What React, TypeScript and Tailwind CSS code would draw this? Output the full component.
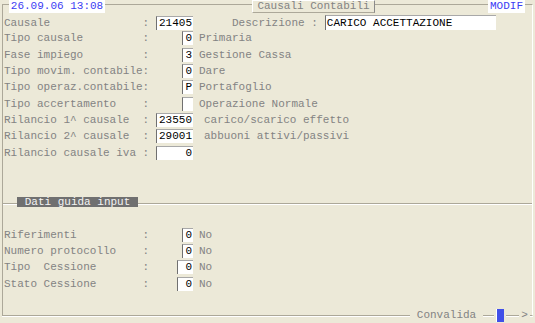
import React from 'react'

type RowProps = {
  label: string
  value: string
  boxW: string
  desc?: string
  descMl?: string
}

function Field({ value, className }: { value: string; className: string }) {
  return (
    <div
      className={`h-[14px] border-l border-t border-l-[#707070] border-t-[#a8a8a8] bg-white pr-[1px] text-right leading-[13px] text-black whitespace-pre ${className}`}
    >
      {value}
    </div>
  )
}

function Row({ label, value, boxW, desc, descMl = 'ml-[6px]' }: RowProps) {
  return (
    <div className="flex h-[16.3px] items-center">
      <span className="w-[146px] whitespace-pre pl-[1px]">{label.padEnd(21, ' ') + ':'}</span>
      <div className="flex w-[44px] justify-end">
        <Field value={value} className={boxW} />
      </div>
      {desc && <span className={`whitespace-pre ${descMl}`}>{desc}</span>}
    </div>
  )
}

export default function App() {
  return (
    <div
      className="h-[323px] w-[535px] overflow-hidden bg-[#ece9d8] pt-[4px] text-[11px] leading-[14px] text-[#838383]"
      style={{ fontFamily: '"Liberation Mono", "Courier New", monospace' }}
    >
      <div className="ml-[2px] flex h-[312px] w-[531px] flex-col border border-[#aca899] border-r-white shadow-[0_1px_0_#fff]">
        {/* header over the top border */}
        <div className="-mt-[5px] flex h-[14px] items-start">
          <div className="ml-[6px] h-[13px] w-[96px] bg-white text-center leading-[13px] text-[#3c3cf4]">
            26.09.06 13:08
          </div>
          <div className="ml-[147px] h-[13px] w-[123px] border border-t-white border-l-white border-b-[#aca899] border-r-[#8a8a8a] bg-[#ece9d8] text-center leading-[11px]">
            Causali Contabili
          </div>
          <div className="ml-[113px] h-[13px] w-[37px] bg-white text-center leading-[13px] text-[#3c3cf4]">
            MODIF
          </div>
        </div>

        {/* main fields */}
        <div className="flex h-[16.3px] items-center pt-[1px]">
          <span className="w-[146px] whitespace-pre pl-[1px]">{'Causale'.padEnd(21, ' ') + ':'}</span>
          <div className="flex w-[44px] justify-end">
            <Field value="21405" className="w-[37px]" />
          </div>
          <span className="ml-[39px] whitespace-pre">Descrizione :</span>
          <div className="ml-[7px] h-[15px] w-[171px] border-l border-t border-l-[#707070] border-t-[#a8a8a8] bg-white pl-[1px] leading-[14px] text-black">
            CARICO ACCETTAZIONE
          </div>
        </div>
        <Row label="Tipo causale" value="0" boxW="w-[11px]" desc="Primaria" />
        <Row label="Fase impiego" value="3" boxW="w-[11px]" desc="Gestione Cassa" />
        <Row label="Tipo movim. contabile" value="0" boxW="w-[11px]" desc="Dare" />
        <Row label="Tipo operaz.contabile" value="P" boxW="w-[11px]" desc="Portafoglio" />
        <Row label="Tipo accertamento" value="" boxW="w-[11px]" desc="Operazione Normale" />
        <Row label="Rilancio 1^ causale" value="23550" boxW="w-[37px]" desc="carico/scarico effetto" descMl="ml-[11px]" />
        <Row label="Rilancio 2^ causale" value="29001" boxW="w-[37px]" desc="abbuoni attivi/passivi" descMl="ml-[11px]" />
        <Row label="Rilancio causale iva" value="0" boxW="w-[37px]" />

        {/* section divider */}
        <div className="mt-[35px] flex h-[12px] items-start">
          <div className="mt-[7px] h-[2px] w-[14px] border-t border-b border-t-[#aca899] border-b-white" />
          <div className="mt-[1px] h-[10px] w-[121px] bg-[#707070] text-center leading-[10px] text-[#f4f4f4]">
            Dati guida input
          </div>
          <div className="mt-[7px] h-[2px] flex-1 border-t border-b border-t-[#aca899] border-b-white" />
        </div>

        <div className="mt-[19px]">
          <Row label="Riferimenti" value="0" boxW="w-[11px]" desc="No" />
          <Row label="Numero protocollo" value="0" boxW="w-[11px]" desc="No" />
          <Row label="Tipo  Cessione" value="0" boxW="w-[16px]" desc="No" />
          <Row label="Stato Cessione" value="0" boxW="w-[16px]" desc="No" />
        </div>

        <div className="flex-1" />

        {/* footer over the bottom border */}
        <div className="-mb-[7px] flex h-[14px] items-center">
          <div className="flex-1" />
          <span className="w-[73px] bg-[#ece9d8] text-center">Convalida</span>
          <div className="w-[11px]" />
          <div className="h-[14px] w-[2px] bg-[#ece9d8]" />
          <div className="mt-[1px] h-[13px] w-[8px] border-l border-l-white bg-[#4150e8]" />
          <div className="h-[14px] w-[2px] bg-[#ece9d8]" />
          <div className="w-[13px]" />
          <span className="w-[11px] bg-[#ece9d8] text-center">&gt;</span>
          <div className="w-[2px]" />
        </div>
      </div>
    </div>
  )
}
